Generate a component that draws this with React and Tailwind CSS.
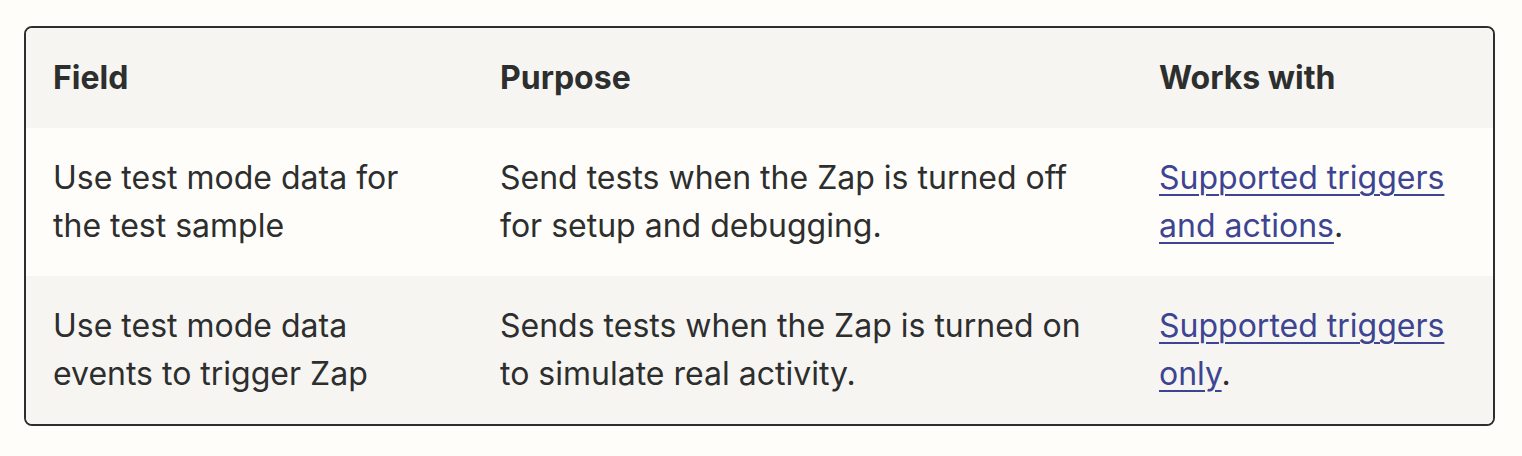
export default function App() {
  const rows = [
    {
      field: "Use test mode data for the test sample",
      purpose: "Send tests when the Zap is turned off for setup and debugging.",
      link: "Supported triggers and actions",
      bg: "bg-[#fffdf9]",
    },
    {
      field: "Use test mode data events to trigger Zap",
      purpose: "Sends tests when the Zap is turned on to simulate real activity.",
      link: "Supported triggers only",
      bg: "bg-[#f7f5f2]",
    },
  ];
  return (
    <div
      className="w-[1522px] h-[456px] bg-[#fffdf9] pt-[26px] pl-[24px] text-[#2d2e2e]"
      style={{ fontFamily: "Inter, 'Noto Sans', sans-serif" }}
    >
      <div className="w-[1471px] border-2 border-[#2d2e2e] rounded-[8px] overflow-hidden">
        <div className="grid grid-cols-[446px_659px_1fr] bg-[#f7f5f2] text-[32px] leading-[48px] font-bold">
          <div className="px-[27px] py-[26px]">Field</div>
          <div className="px-[28px] py-[26px]">Purpose</div>
          <div className="px-[28px] py-[26px]">Works with</div>
        </div>
        {rows.map((r, i) => (
          <div key={i} className={`grid grid-cols-[446px_659px_1fr] ${r.bg} text-[32px] leading-[48px]`}>
            <div className="pl-[27px] py-[26px] pr-[28px]">{r.field}</div>
            <div className="pl-[28px] py-[26px] pr-[30px]">{r.purpose}</div>
            <div className="pl-[28px] py-[26px] pr-[40px]">
              <a href="#" className="text-[#3d4592] underline decoration-2 underline-offset-[5px]">
                {r.link}
              </a>
              .
            </div>
          </div>
        ))}
      </div>
    </div>
  );
}
